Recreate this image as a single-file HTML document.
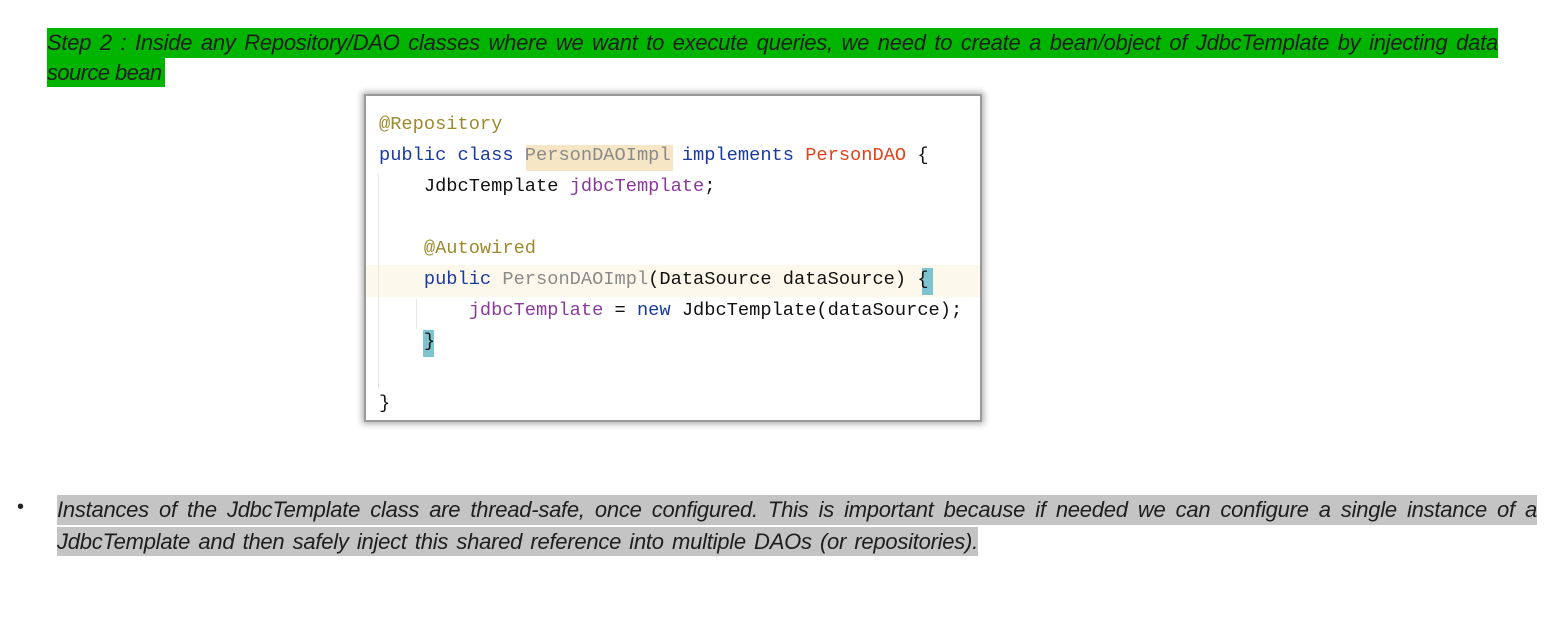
<!DOCTYPE html>
<html><head><meta charset="utf-8"><style>
body{margin:0;width:1557px;height:642px;background:#fff;position:relative;overflow:hidden;font-family:"Liberation Sans",sans-serif}
.l{position:absolute;white-space:nowrap;font-style:italic;font-size:22px;letter-spacing:-0.25px;color:#1e1e1e;text-align:justify;text-align-last:justify;line-height:30px}
.g{background:#00b400}
.h{background:#c4c4c4}
.code{position:absolute;left:366px;top:96px;width:614px;height:324px;background:#fff;box-shadow:0 0 0 2px #9a9a9a,0 0 6px 4px #b0b0b0}
.c{position:absolute;font-family:"Liberation Mono",monospace;font-size:18.7px;white-space:pre;color:#111;line-height:24px}
.an{color:#9e8a2e}.kw{color:#1a3aa0}.pu{color:#8a3a9a}.rd{color:#e0431a}.gr{color:#8a8a8a}
</style></head><body>
<div class="l g" style="left:47px;top:28px;width:1451px;height:30px">Step 2 : Inside any Repository/DAO classes where we want to execute queries, we need to create a bean/object of JdbcTemplate by injecting data</div>
<div class="l g" style="left:47px;top:58px;width:118px;height:29px;text-align-last:left;letter-spacing:-0.6px">source bean</div>

<div class="code">
<div style="position:absolute;left:0;top:169px;width:614px;height:32px;background:#fdf8ec"></div>
<div style="position:absolute;left:160px;top:49px;width:147px;height:26px;background:#f6e6c6"></div>
<div style="position:absolute;left:556px;top:172px;width:11px;height:27px;background:#7ec4d0"></div>
<div style="position:absolute;left:57px;top:234px;width:11px;height:27px;background:#7ec4d0"></div>
<div style="position:absolute;left:12px;top:78px;width:1px;height:215px;background:#e6e6e6"></div>
<div style="position:absolute;left:50px;top:203px;width:1px;height:30px;background:#e6e6e6"></div>
<div class="c" style="left:13px;top:16px"><span class="an">@Repository</span></div>
<div class="c" style="left:13px;top:47px"><span class="kw">public class</span> <span class="gr">PersonDAOImpl</span> <span class="kw">implements</span> <span class="rd">PersonDAO</span> {</div>
<div class="c" style="left:13px;top:78px">    JdbcTemplate <span class="pu">jdbcTemplate</span>;</div>
<div class="c" style="left:13px;top:140px">    <span class="an">@Autowired</span></div>
<div class="c" style="left:13px;top:171px">    <span class="kw">public</span> <span class="gr">PersonDAOImpl</span>(DataSource dataSource) {</div>
<div class="c" style="left:13px;top:202px">        <span class="pu">jdbcTemplate</span> = <span class="kw">new</span> JdbcTemplate(dataSource);</div>
<div class="c" style="left:13px;top:233px">    }</div>
<div class="c" style="left:13px;top:295px">}</div>
</div>

<div style="position:absolute;left:17px;top:496px;font-size:20px;color:#222">•</div>
<div class="l h" style="left:57px;top:495px;width:1480px;height:30px">Instances of the JdbcTemplate class are thread-safe, once configured. This is important because if needed we can configure a single instance of a</div>
<div class="l h" style="left:57px;top:527px;width:921px;height:29px">JdbcTemplate and then safely inject this shared reference into multiple DAOs (or repositories).</div>
</body></html>
